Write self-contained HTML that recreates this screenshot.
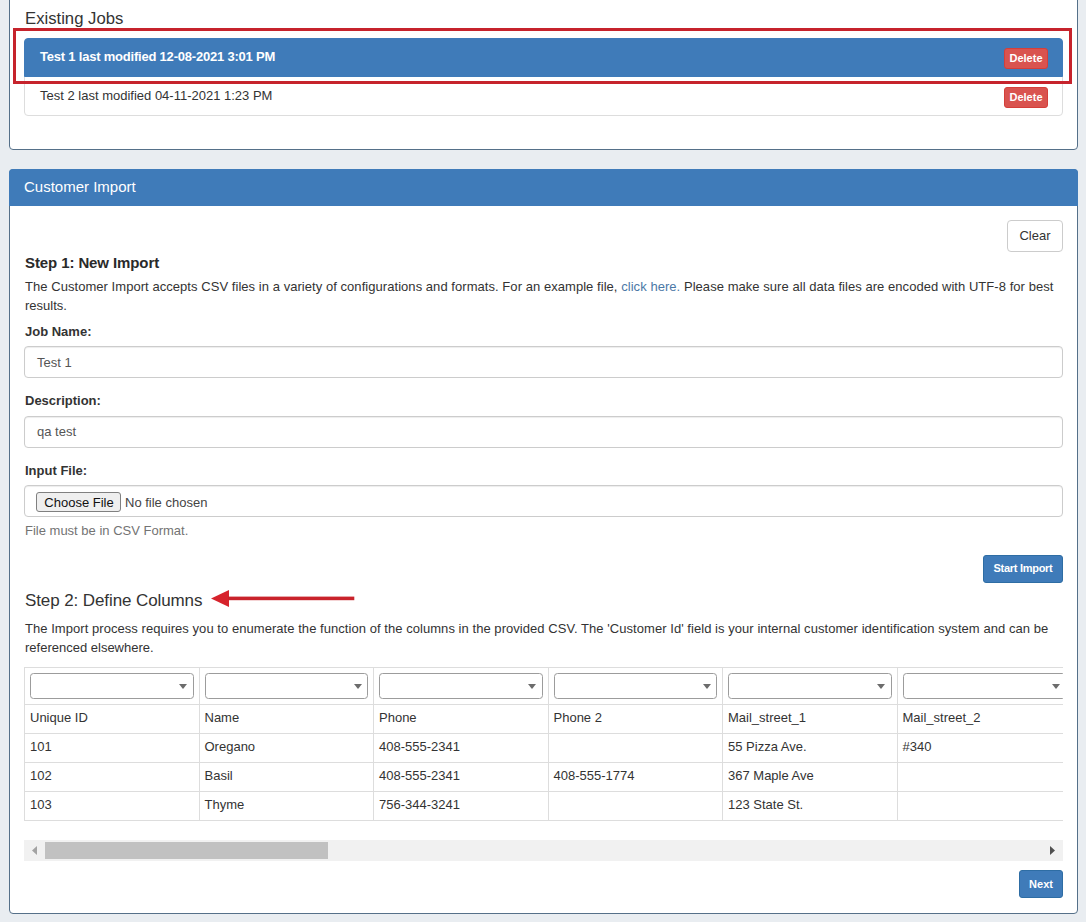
<!DOCTYPE html>
<html>
<head>
<meta charset="utf-8">
<title>Customer Import</title>
<style>
*{box-sizing:border-box;margin:0;padding:0}
html,body{width:1086px;height:922px;overflow:hidden}
body{background:#e9edf1;font-family:"Liberation Sans",sans-serif;font-size:13px;line-height:19px;color:#333;position:relative}
.abs{position:absolute}
.panel{position:absolute;background:#fff;border:1px solid #557089}
#p1{left:9px;top:-10px;width:1069px;height:160px;border-radius:0 0 4px 4px}
#p2{left:9px;top:169px;width:1069px;height:745px;border-radius:4px}
#p2h{position:absolute;left:9px;top:169px;width:1069px;height:37px;background:#3f7bb9;border-radius:4px 4px 0 0;color:#fff;font-size:15px;line-height:35px;padding-left:15px}
.t{position:absolute;white-space:nowrap}
.b{font-weight:bold}
.lg{position:absolute;left:24px;width:1039px;height:40px;border:1px solid #ddd;background:#fff;padding-left:15px;line-height:36px}
#li1{top:38px;height:39px;line-height:35px;letter-spacing:-0.21px;background:#3f7bb9;border-color:#3f7bb9;color:#fff;font-weight:bold;border-radius:4px 4px 0 0;z-index:2}
#li2{top:76px;line-height:38px;border-radius:0 0 4px 4px}
.del{position:absolute;left:1004px;width:44px;height:21px;background:#d9534f;border:1px solid #d43f3a;border-radius:3px;color:#fff;font-weight:bold;font-size:11px;line-height:19px;text-align:center;z-index:3}
#red{position:absolute;left:13px;top:28px;width:1059px;height:56px;border:3px solid #c6232c;z-index:4}
.inp{position:absolute;left:24px;width:1039px;height:32px;border:1px solid #ccc;border-radius:4px;background:#fff;padding-left:12px;line-height:32px;color:#555;box-shadow:inset 0 1px 1px rgba(0,0,0,.075)}
.btn{position:absolute;border-radius:4px;text-align:center;white-space:nowrap}
.pri{background:#3f7bb9;border:1px solid #2e6da4;color:#fff;font-weight:bold;font-size:11px}
#tblwrap{position:absolute;left:24px;top:667px;width:1039px;height:155px;overflow:hidden}
table{border-collapse:collapse;table-layout:fixed;width:1221.5px}
td{border:1px solid #ddd;width:174.5px;height:29px;padding:2.5px 5px 0;vertical-align:top;line-height:19px;white-space:nowrap}
tr.s td{height:37px;padding:5px 5px 0}
.sel{display:block;position:relative;width:100%;height:26px;border:1px solid #9c9c9c;border-radius:3.5px;background:#fff}
.sel:after{content:"";position:absolute;right:5.5px;top:10px;border-left:4px solid transparent;border-right:4px solid transparent;border-top:5px solid #6c6c6c}
#sb{position:absolute;left:24px;top:840px;width:1039px;height:21px;background:#f1f1f1}
#thumb{position:absolute;left:21px;top:2px;width:283px;height:17px;background:#c1c1c1}
</style>
</head>
<body>
<div class="panel" id="p1"></div>
<div class="t" style="left:25px;top:9px;font-size:16.7px;line-height:20px">Existing Jobs</div>
<div class="lg" id="li1">Test 1 last modified 12-08-2021 3:01 PM</div>
<div class="lg" id="li2">Test 2 last modified 04-11-2021 1:23 PM</div>
<div class="del" style="top:48px">Delete</div>
<div class="del" style="top:87px">Delete</div>
<div id="red"></div>

<div class="panel" id="p2"></div>
<div id="p2h">Customer Import</div>

<div class="btn" style="left:1007px;top:220px;width:56px;height:32px;border:1px solid #ccc;background:#fff;line-height:30px;color:#333">Clear</div>
<div class="t b" style="left:25px;top:253px;font-size:15px;line-height:20px;color:#2a2a2a;letter-spacing:-0.1px">Step 1: New Import</div>
<div class="t" style="left:25px;top:277px;letter-spacing:0.05px">The Customer Import accepts CSV files in a variety of configurations and formats. For an example file, <span style="color:#4b78a6">click here.</span> Please make sure all data files are encoded with UTF-8 for best</div>
<div class="t" style="left:25px;top:296px">results.</div>
<div class="t b" style="left:25px;top:322px">Job Name:</div>
<div class="inp" style="top:346px">Test 1</div>
<div class="t b" style="left:25px;top:391px">Description:</div>
<div class="inp" style="top:416px;line-height:30px">qa test</div>
<div class="t b" style="left:25px;top:461px">Input File:</div>
<div class="inp" style="top:485px"></div>
<div class="btn" style="left:36px;top:492px;width:85px;height:20px;border:1px solid #808080;border-radius:3px;background:#efefef;color:#111;line-height:20px;padding-left:1px">Choose File</div>
<div class="t" style="left:125px;top:493px;color:#444">No file chosen</div>
<div class="t" style="left:25px;top:521px;color:#737373">File must be in CSV Format.</div>
<div class="btn pri" style="left:983px;top:555px;width:80px;height:28px;line-height:24px;letter-spacing:-0.29px;border-radius:3px">Start Import</div>

<div class="t" style="left:25px;top:591px;font-size:17px;line-height:20px;letter-spacing:-0.1px">Step 2: Define Columns</div>
<svg class="abs" style="left:205px;top:585px" width="160" height="28" viewBox="0 0 160 28"><path d="M6 13.4 L24 5 L24 22 Z" fill="#d6232c"/><rect x="23" y="11.6" width="126.3" height="3.6" fill="#c9232b"/></svg>
<div class="t" style="left:25px;top:619px;letter-spacing:0.05px">The Import process requires you to enumerate the function of the columns in the provided CSV. The 'Customer Id' field is your internal customer identification system and can be</div>
<div class="t" style="left:25px;top:638px">referenced elsewhere.</div>

<div id="tblwrap">
<table>
<tr class="s"><td><span class="sel"></span></td><td><span class="sel"></span></td><td><span class="sel"></span></td><td><span class="sel"></span></td><td><span class="sel"></span></td><td><span class="sel"></span></td><td><span class="sel"></span></td></tr>
<tr><td>Unique ID</td><td>Name</td><td>Phone</td><td>Phone 2</td><td>Mail_street_1</td><td>Mail_street_2</td><td></td></tr>
<tr><td>101</td><td>Oregano</td><td>408-555-2341</td><td></td><td>55 Pizza Ave.</td><td>#340</td><td></td></tr>
<tr><td>102</td><td>Basil</td><td>408-555-2341</td><td>408-555-1774</td><td>367 Maple Ave</td><td></td><td></td></tr>
<tr><td>103</td><td>Thyme</td><td>756-344-3241</td><td></td><td>123 State St.</td><td></td><td></td></tr>
</table>
</div>

<div id="sb"><div id="thumb"></div>
<svg class="abs" style="left:0;top:0" width="21" height="21"><path d="M8 10.5 L13 6 L13 15 Z" fill="#a3a3a3"/></svg>
<svg class="abs" style="right:0;top:0" width="21" height="21"><path d="M13 10.5 L8 6 L8 15 Z" fill="#505050"/></svg>
</div>
<div class="btn pri" style="left:1019px;top:870px;width:44px;height:28px;line-height:26px;border-radius:3px">Next</div>
</body>
</html>
